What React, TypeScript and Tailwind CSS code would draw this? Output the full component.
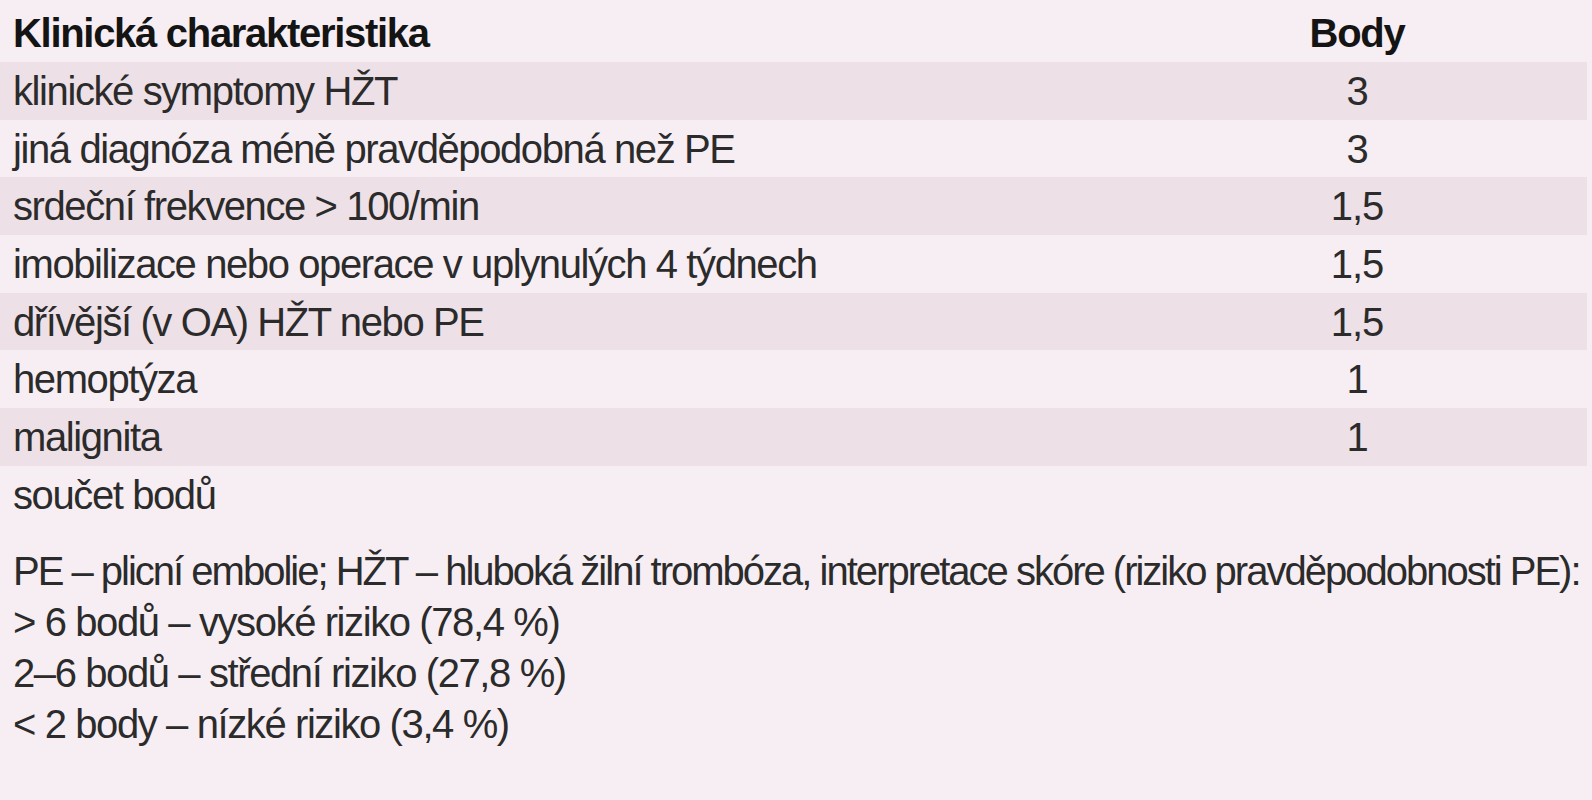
const rows: [string, string][] = [
  ["klinické symptomy HŽT", "3"],
  ["jiná diagnóza méně pravděpodobná než PE", "3"],
  ["srdeční frekvence > 100/min", "1,5"],
  ["imobilizace nebo operace v uplynulých 4 týdnech", "1,5"],
  ["dřívější (v OA) HŽT nebo PE", "1,5"],
  ["hemoptýza", "1"],
  ["malignita", "1"],
];

export default function App() {
  return (
    <div
      className="w-[1592px] h-[800px] bg-[#f7eef3] text-[#2b2b2b] text-[40px] tracking-[-1.4px] pr-[5px]"
      style={{ fontFamily: "'Liberation Sans', Arial, sans-serif" }}
    >
      <div className="flex h-[62px] items-center pt-[4px] text-[#141414] font-bold tracking-[-1.3px]">
        <div className="flex-1 pl-[13px]">Klinická charakteristika</div>
        <div className="w-[460px] text-center">Body</div>
      </div>
      {rows.map(([label, pts], i) => (
        <div
          key={label}
          className={`flex h-[57.7px] items-center ${i % 2 === 0 ? "bg-[#ede0e6]" : ""}`}
        >
          <div className="flex-1 pl-[13px]">{label}</div>
          <div className="w-[460px] text-center tracking-[-1px]">{pts}</div>
        </div>
      ))}
      <div className="flex h-[57.7px] items-center">
        <div className="flex-1 pl-[13px]">součet bodů</div>
      </div>
      <div className="pl-[13px] pt-[22px] leading-[51px] flex flex-col">
        <div className="whitespace-nowrap tracking-[-2px]">PE – plicní embolie; HŽT – hluboká žilní trombóza, interpretace skóre (riziko pravděpodobnosti PE):</div>
        <div>&gt; 6 bodů – vysoké riziko (78,4 %)</div>
        <div>2–6 bodů – střední riziko (27,8 %)</div>
        <div>&lt; 2 body – nízké riziko (3,4 %)</div>
      </div>
    </div>
  );
}
